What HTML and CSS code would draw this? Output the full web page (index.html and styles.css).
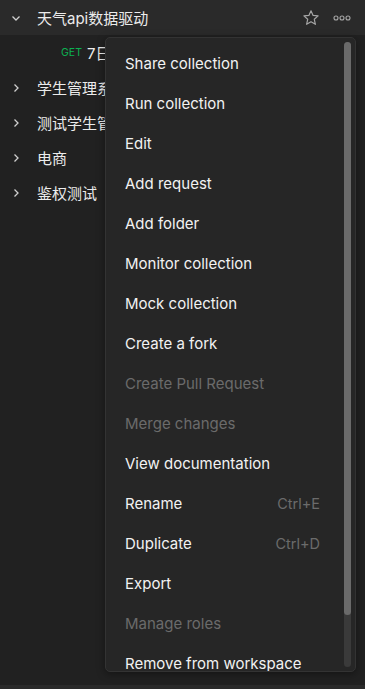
FILE: index.html
```html
<!DOCTYPE html>
<html lang="en">
<head>
    <meta charset="UTF-8">
    <meta name="viewport" content="width=device-width, initial-scale=1.0">
    <title>Collections</title>
    <link rel="stylesheet" href="styles.css">
</head>
<body>
    <div class="sidebar">
        <div class="row row-open">
            <svg class="chevron" width="12" height="12" viewBox="0 0 12 12"><path d="M2.5 4.5 L6 8 L9.5 4.5" fill="none" stroke="#cfcfcf" stroke-width="1.3"/></svg>
            <span class="name">天气api数据驱动</span>
            <svg class="star" width="18" height="18" viewBox="0 0 18 18"><path d="M9 1.8 L11.1 6.4 L16.1 6.9 L12.3 10.3 L13.4 15.3 L9 12.7 L4.6 15.3 L5.7 10.3 L1.9 6.9 L6.9 6.4 Z" fill="none" stroke="#a6a6a6" stroke-width="1.2" stroke-linejoin="round"/></svg>
            <svg class="more" width="18" height="6" viewBox="0 0 18 6"><circle cx="3" cy="3" r="2" fill="none" stroke="#a6a6a6" stroke-width="1.1"/><circle cx="9" cy="3" r="2" fill="none" stroke="#a6a6a6" stroke-width="1.1"/><circle cx="15" cy="3" r="2" fill="none" stroke="#a6a6a6" stroke-width="1.1"/></svg>
        </div>
        <div class="row request">
            <span class="method">GET</span>
            <span class="name">7日天气预报</span>
        </div>
        <div class="row">
            <svg class="chevron" width="12" height="12" viewBox="0 0 12 12"><path d="M4.5 2.5 L8 6 L4.5 9.5" fill="none" stroke="#cfcfcf" stroke-width="1.3"/></svg>
            <span class="name">学生管理系统</span>
        </div>
        <div class="row">
            <svg class="chevron" width="12" height="12" viewBox="0 0 12 12"><path d="M4.5 2.5 L8 6 L4.5 9.5" fill="none" stroke="#cfcfcf" stroke-width="1.3"/></svg>
            <span class="name">测试学生管理</span>
        </div>
        <div class="row">
            <svg class="chevron" width="12" height="12" viewBox="0 0 12 12"><path d="M4.5 2.5 L8 6 L4.5 9.5" fill="none" stroke="#cfcfcf" stroke-width="1.3"/></svg>
            <span class="name">电商</span>
        </div>
        <div class="row">
            <svg class="chevron" width="12" height="12" viewBox="0 0 12 12"><path d="M4.5 2.5 L8 6 L4.5 9.5" fill="none" stroke="#cfcfcf" stroke-width="1.3"/></svg>
            <span class="name">鉴权测试</span>
        </div>
    </div>

    <div class="menu">
        <ul class="menu-list">
            <li class="menu-item">Share collection</li>
            <li class="menu-item">Run collection</li>
            <li class="menu-item">Edit</li>
            <li class="menu-item">Add request</li>
            <li class="menu-item">Add folder</li>
            <li class="menu-item">Monitor collection</li>
            <li class="menu-item">Mock collection</li>
            <li class="menu-item">Create a fork</li>
            <li class="menu-item disabled">Create Pull Request</li>
            <li class="menu-item disabled">Merge changes</li>
            <li class="menu-item">View documentation</li>
            <li class="menu-item">Rename <span class="shortcut">Ctrl+E</span></li>
            <li class="menu-item">Duplicate <span class="shortcut">Ctrl+D</span></li>
            <li class="menu-item">Export</li>
            <li class="menu-item disabled">Manage roles</li>
            <li class="menu-item">Remove from workspace</li>
        </ul>
        <div class="scrollbar"><div class="thumb"></div></div>
    </div>

    <div class="statusbar"></div>
</body>
</html>
```

FILE: styles.css
```css
body {
    margin: 0;
    height: 689px;
    overflow: hidden;
    background-color: #212121;
    font-family: Inter, "Noto Sans CJK SC", sans-serif;
    color: #f0f0f0;
    position: relative;
}

.sidebar {
    display: flex;
    flex-direction: column;
}

.row {
    display: flex;
    align-items: center;
    height: 35px;
    padding-left: 10px;
    white-space: nowrap;
    overflow: hidden;
}

.row-open {
    background-color: #2a2a2a;
    padding-right: 14px;
}

.chevron {
    flex: none;
    margin-right: 15px;
}

.name {
    font-size: 15px;
    color: #ececec;
}

.row-open .name {
    flex: 1;
}

.star {
    margin-right: 13px;
}

.request {
    padding-left: 61px;
}

.method {
    font-size: 10.5px;
    color: #0cb152;
    margin-right: 5px;
}

.menu {
    position: absolute;
    left: 105px;
    top: 37px;
    width: 249px;
    height: 633px;
    background-color: #262626;
    border: 1px solid #333333;
    border-radius: 5px;
    box-shadow: 0 2px 8px rgba(0, 0, 0, 0.4);
    overflow: hidden;
}

.menu-list {
    list-style: none;
    margin: 0;
    padding: 5px 0 0 0;
}

.menu-item {
    display: flex;
    justify-content: space-between;
    align-items: center;
    height: 40px;
    padding: 0 35px 0 19px;
    font-size: 15px;
    color: #f2f2f2;
}

.menu-item.disabled {
    color: #6b6b6b;
}

.shortcut {
    color: #6b6b6b;
    font-size: 14.5px;
}

.scrollbar {
    position: absolute;
    top: 4px;
    right: 4px;
    width: 7px;
    height: 625px;
    border-radius: 4px;
    background-color: #3a3a3a;
}

.thumb {
    height: 573px;
    border-radius: 4px;
    background-color: #6a6a6a;
}

.statusbar {
    position: absolute;
    left: 0;
    right: 0;
    bottom: 0;
    height: 4px;
    background-color: #2a2a2a;
}
```
